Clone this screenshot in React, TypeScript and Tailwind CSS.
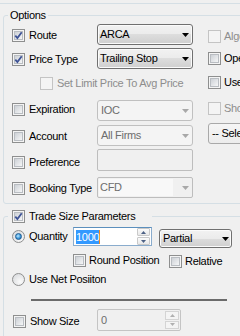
import React from "react";

function Check({ checked = false, disabled = false }: { checked?: boolean; disabled?: boolean }) {
  return (
    <div
      className={
        disabled
          ? "relative w-[13px] h-[13px] shrink-0 border border-[#c4c4c4] bg-[#f4f4f4]"
          : "relative w-[13px] h-[13px] shrink-0 border border-[#8e8f8f] bg-[#f4f4f4] p-[1px]"
      }
    >
      {!disabled && <div className="w-full h-full border border-[#b9bdc2] bg-[linear-gradient(135deg,#cdd1d6,#f5f6f7)]" />}
      {checked && (
        <svg className="absolute left-[1px] top-[1px]" width="9" height="9" viewBox="0 0 9 9">
          <path d="M1.3 4.6 L3.4 7 L7.7 1.2" fill="none" stroke="#3f5496" strokeWidth="1.8" />
        </svg>
      )}
    </div>
  );
}

function Radio({ checked = false }: { checked?: boolean }) {
  return (
    <div className="w-[13px] h-[13px] shrink-0 rounded-full border border-[#8e8f8f] bg-[radial-gradient(circle_at_65%_70%,#fbfbfb,#d4d6d9)] flex items-center justify-center">
      {checked && (
        <div className="w-[7px] h-[7px] rounded-full border border-[#1f5c93] bg-[radial-gradient(circle_at_40%_40%,#bfeaff,#3c98da_55%,#1a5d9c)]" />
      )}
    </div>
  );
}

function Arrow({ color }: { color: string }) {
  return (
    <svg width="7" height="4" viewBox="0 0 7 4" className="shrink-0">
      <path d="M0 0h7L3.5 4z" fill={color} />
    </svg>
  );
}

function SpinArrow({ up, color }: { up: boolean; color: string }) {
  return (
    <svg width="5" height="3" viewBox="0 0 5 3">
      <path d={up ? "M0 3h5L2.5 0z" : "M0 0h5L2.5 3z"} fill={color} />
    </svg>
  );
}

export default function App() {
  return (
    <div className="w-[240px] h-[336px] overflow-hidden bg-[#f0f0f0] text-[11px] leading-[13px] tracking-[-0.3px] text-black font-['Liberation_Sans',Arial,sans-serif] flex flex-col">
      <div className="h-[4px] shrink-0 border-b border-[#d5dfe5]" />

      {/* Options group */}
      <div className="relative ml-[3px] mt-[11px] w-[260px] h-[189px] shrink-0 border border-[#d5dfe5] rounded-[3px] flex">
        <span className="absolute left-[4px] -top-[6px] px-[2px] bg-[#f0f0f0] leading-[11px]">Options</span>

        <div className="w-[189px] shrink-0 pt-[7px] flex flex-col">
          {/* Route */}
          <div className="h-[24px] flex items-start pl-[8px]">
            <div className="w-[85px] mt-[6px] flex items-center gap-[4px]">
              <Check checked />
              <span>Route</span>
            </div>
            <div className="mt-[1px] w-[96px] h-[21px] border border-[#707070] rounded-[3px] bg-[linear-gradient(#f2f2f2_0%,#ebebeb_50%,#dddddd_50%,#cfcfcf_100%)] shadow-[inset_0_0_0_1px_#fbfbfb] flex items-center justify-between pl-[2px] pr-[3px]">
              <span>ARCA</span>
              <Arrow color="#000" />
            </div>
          </div>
          {/* Price Type */}
          <div className="h-[24px] flex items-start pl-[8px]">
            <div className="w-[85px] mt-[6px] flex items-center gap-[4px]">
              <Check checked />
              <span>Price Type</span>
            </div>
            <div className="mt-[1px] w-[96px] h-[21px] border border-[#707070] rounded-[3px] bg-[linear-gradient(#f2f2f2_0%,#ebebeb_50%,#dddddd_50%,#cfcfcf_100%)] shadow-[inset_0_0_0_1px_#fbfbfb] flex items-center justify-between pl-[2px] pr-[3px]">
              <span>Trailing Stop</span>
              <Arrow color="#000" />
            </div>
          </div>
          {/* Set limit */}
          <div className="h-[26px] flex items-start pl-[36px]">
            <div className="mt-[6px] flex items-center gap-[4px] whitespace-nowrap">
              <Check disabled />
              <span className="text-[#8d8d8d]">Set Limit Price To Avg Price</span>
            </div>
          </div>
          {/* Expiration */}
          <div className="h-[26px] flex items-start pl-[8px]">
            <div className="w-[85px] mt-[6px] flex items-center gap-[4px]">
              <Check />
              <span>Expiration</span>
            </div>
            <div className="mt-[3px] w-[96px] h-[21px] border border-[#c0c0c0] rounded-[3px] bg-[#f4f4f4] flex items-center justify-between pl-[3px] pr-[3px]">
              <span className="text-[#6d6d6d]">IOC</span>
              <Arrow color="#a8a8a8" />
            </div>
          </div>
          {/* Account */}
          <div className="h-[26px] flex items-start pl-[8px]">
            <div className="w-[85px] mt-[7px] flex items-center gap-[4px]">
              <Check />
              <span>Account</span>
            </div>
            <div className="mt-[2px] w-[96px] h-[21px] border border-[#c0c0c0] rounded-[3px] bg-[#f4f4f4] flex items-center justify-between pl-[3px] pr-[3px]">
              <span className="text-[#6d6d6d]">All Firms</span>
              <Arrow color="#a8a8a8" />
            </div>
          </div>
          {/* Preference */}
          <div className="h-[26px] flex items-start pl-[8px]">
            <div className="w-[85px] mt-[7px] flex items-center gap-[4px]">
              <Check />
              <span>Preference</span>
            </div>
            <div className="mt-0 w-[96px] h-[22px] border border-[#bdbdbd] rounded-[2px] bg-[#f0f0f0]" />
          </div>
          {/* Booking Type */}
          <div className="h-[26px] flex items-start pl-[8px]">
            <div className="w-[85px] mt-[7px] flex items-center gap-[4px] whitespace-nowrap">
              <Check />
              <span>Booking Type</span>
            </div>
            <div className="mt-[2px] w-[96px] h-[21px] border border-[#bdbdbd] rounded-[2px] bg-[#f0f0f0] flex items-stretch p-[1px]">
              <div className="w-[74px] bg-[#f8f8f8] flex items-center pl-[1px]">
                <span className="text-[#6d6d6d]">CFD</span>
              </div>
              <div className="flex-1 flex items-center justify-end pr-[2px]">
                <Arrow color="#a8a8a8" />
              </div>
            </div>
          </div>
        </div>

        {/* right column */}
        <div className="ml-[15px] flex flex-col">
          <div className="mt-[14px] flex items-center gap-[3px]">
            <Check disabled />
            <span className="text-[#8d8d8d]">Algo</span>
          </div>
          <div className="mt-[9px] flex items-center gap-[3px]">
            <Check />
            <span>Open</span>
          </div>
          <div className="mt-[11px] flex items-center gap-[3px]">
            <Check />
            <span>Use</span>
          </div>
          <div className="mt-[13px] flex items-center gap-[3px]">
            <Check disabled />
            <span className="text-[#8d8d8d]">Show</span>
          </div>
          <div className="mt-[8px] w-[60px] h-[21px] border border-[#a9a9a9] rounded-[3px] bg-[linear-gradient(#f6f6f6,#ececec)] flex items-center pl-[3px] whitespace-nowrap">
            <span>-- Select --</span>
          </div>
        </div>
      </div>

      {/* Trade Size Parameters group */}
      <div className="relative ml-[3px] mt-[12px] w-[260px] h-[140px] shrink-0 border border-[#d5dfe5] rounded-[3px] flex flex-col">
        <div className="absolute left-[4px] -top-[7px] w-[144px] h-[13px] bg-[#f0f0f0] pl-[4px] flex items-center gap-[4px] whitespace-nowrap">
          <Check checked />
          <span>Trade Size Parameters</span>
        </div>

        {/* Quantity row */}
        <div className="mt-[10px] h-[21px] flex items-start pl-[8px]">
          <div className="w-[61px] mt-[3px] flex items-center gap-[4px]">
            <Radio checked />
            <span>Quantity</span>
          </div>
          <div className="w-[79px] h-[19px] border border-[#8aaccd] border-t-[#5b8fbd] bg-white flex">
            <div className="flex-1 flex items-center pl-[2px]">
              <span className="bg-[#3399ff] text-white h-[14px] leading-[14px] border-r border-[#f08a24]">1000</span>
            </div>
            <div className="w-[14px] flex flex-col gap-[1px] pr-[1px]">
              <div className="h-[8px] border border-[#c9c9c9] rounded-[1px] bg-[linear-gradient(#fbfbfb,#e8e8e8)] flex items-center justify-center">
                <SpinArrow up color="#4d6185" />
              </div>
              <div className="h-[8px] border border-[#c9c9c9] rounded-[1px] bg-[linear-gradient(#fbfbfb,#e8e8e8)] flex items-center justify-center">
                <SpinArrow up={false} color="#4d6185" />
              </div>
            </div>
          </div>
          <div className="ml-[7px] mt-[2px] w-[73px] h-[19px] border border-[#707070] rounded-[3px] bg-[linear-gradient(#f2f2f2_0%,#ebebeb_50%,#dddddd_50%,#cfcfcf_100%)] shadow-[inset_0_0_0_1px_#fbfbfb] flex items-center justify-between pl-[3px] pr-[2px]">
            <span>Partial</span>
            <Arrow color="#000" />
          </div>
        </div>

        {/* Round / Relative */}
        <div className="mt-[6px] h-[14px] flex items-start pl-[69px]">
          <div className="w-[96px] flex items-center gap-[3px] whitespace-nowrap">
            <Check />
            <span>Round Position</span>
          </div>
          <div className="mt-[1px] flex items-center gap-[3px]">
            <Check />
            <span>Relative</span>
          </div>
        </div>

        {/* Use Net */}
        <div className="mt-[5px] h-[13px] flex items-center gap-[4px] pl-[8px]">
          <Radio />
          <span>Use Net Posiiton</span>
        </div>

        {/* divider line */}
        <div className="mt-[13px] ml-[27px] w-[196px] h-[2px] bg-[#6b6b6b]" />

        {/* Show Size */}
        <div className="mt-[8px] h-[22px] flex items-start pl-[9px]">
          <div className="w-[84px] mt-[6px] flex items-center gap-[4px]">
            <Check />
            <span>Show Size</span>
          </div>
          <div className="w-[84px] h-[22px] border border-[#c4c4c4] rounded-[2px] bg-[#f0f0f0] flex">
            <div className="flex-1 flex items-center pl-[3px]">
              <span className="text-[#6d6d6d]">0</span>
            </div>
            <div className="w-[16px] flex flex-col gap-[1px] p-[1px]">
              <div className="flex-1 border border-[#d4d4d4] bg-[#f4f4f4] flex items-center justify-center">
                <SpinArrow up color="#b0b0b0" />
              </div>
              <div className="flex-1 border border-[#d4d4d4] bg-[#f4f4f4] flex items-center justify-center">
                <SpinArrow up={false} color="#b0b0b0" />
              </div>
            </div>
          </div>
        </div>
      </div>
    </div>
  );
}
